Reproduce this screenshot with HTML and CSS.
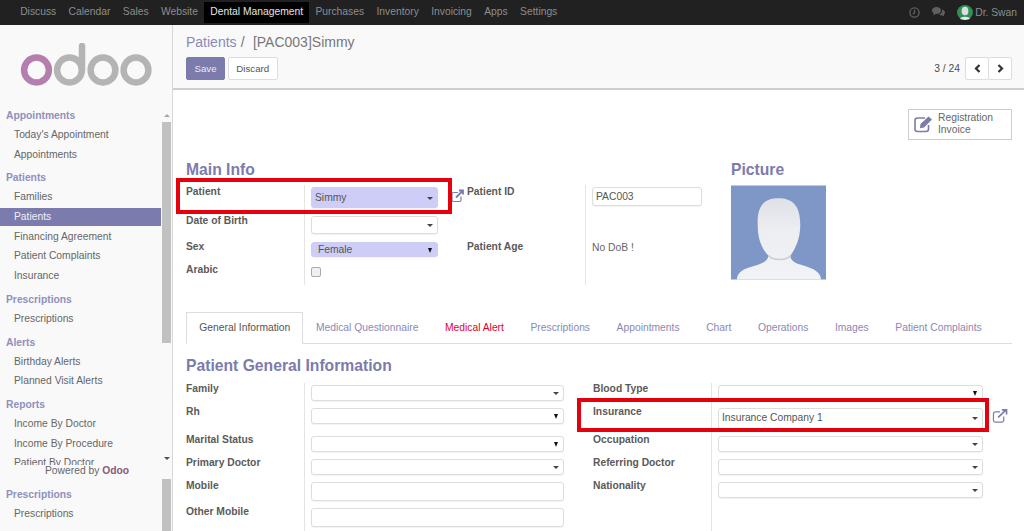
FILE: index.html
```html
<!DOCTYPE html>
<html lang="en">

<head>
    <meta charset="UTF-8">
    <title>Patients - Odoo</title>
    <link rel="stylesheet" href="styles.css">
</head>

<body>
    <nav class="topbar">
        <ul class="apps">
            <li>Discuss</li>
            <li>Calendar</li>
            <li>Sales</li>
            <li>Website</li>
            <li class="current">Dental Management</li>
            <li>Purchases</li>
            <li>Inventory</li>
            <li>Invoicing</li>
            <li>Apps</li>
            <li>Settings</li>
        </ul>
        <div class="systray">
            <svg class="tray-icon" width="11" height="11" viewBox="0 0 11 11" fill="none" stroke="#5f5f5f" stroke-width="1.3">
                <circle cx="5.5" cy="5.5" r="4.6" />
                <path d="M5.5 2.8V5.8L3.8 7" />
            </svg>
            <svg class="tray-icon" width="13" height="10" viewBox="0 0 13 10" fill="#5f5f5f">
                <path d="M0 3.5C0 1.5 2 0 4.5 0S9 1.5 9 3.5 7 7 4.5 7H3.5L1.2 8.5 1.6 6.2C.6 5.6 0 4.6 0 3.5Z" />
                <path d="M10 2.5C11.8 3 13 4.1 13 5.6 13 6.5 12.5 7.2 11.8 7.7L12.2 9.6 10 8.3C8.8 8.3 7.6 8 6.8 7.4 8.8 7.2 10.6 5.6 10 2.5Z" />
            </svg>
            <svg class="avatar" width="16" height="15" viewBox="0 0 16 15">
                <ellipse cx="8" cy="7.5" rx="8" ry="7.5" fill="#2f8f57" />
                <ellipse cx="8" cy="6" rx="3.4" ry="4.3" fill="#d9dedb" />
                <path d="M3 14C4 11 12 11 13 14L8 15Z" fill="#e6e9e7" />
            </svg>
            <span>Dr. Swan</span>
        </div>
    </nav>

    <div class="app">
        <aside class="sidebar">
            <div class="logo">
                <svg width="134" height="46" viewBox="0 0 134 46" fill="none" stroke-width="6.5">
                    <circle cx="16.5" cy="27" r="12.4" stroke="#b47fae" />
                    <circle cx="49.5" cy="27" r="12.4" stroke="#b4b4b4" />
                    <path d="M62 3V27" stroke="#b4b4b4" stroke-linecap="round" />
                    <circle cx="83" cy="27" r="12.4" stroke="#b4b4b4" />
                    <circle cx="116" cy="27" r="12.4" stroke="#b4b4b4" />
                </svg>
            </div>

            <div class="menu-scroll upper">
                <div class="menu-list">
                    <h4>Appointments</h4>
                    <a>Today's Appointment</a>
                    <a>Appointments</a>
                    <h4>Patients</h4>
                    <a>Families</a>
                    <a class="active">Patients</a>
                    <a>Financing Agreement</a>
                    <a>Patient Complaints</a>
                    <a>Insurance</a>
                    <h4>Prescriptions</h4>
                    <a>Prescriptions</a>
                    <h4>Alerts</h4>
                    <a>Birthday Alerts</a>
                    <a>Planned Visit Alerts</a>
                    <h4>Reports</h4>
                    <a>Income By Doctor</a>
                    <a>Income By Procedure</a>
                    <a>Patient By Doctor</a>
                </div>
                <div class="scrollbar">
                    <span class="arrow-up"></span>
                    <span class="thumb"></span>
                    <span class="arrow-down"></span>
                </div>
            </div>

            <div class="powered">Powered by <b>Odoo</b></div>

            <div class="menu-scroll lower">
                <div class="menu-list">
                    <h4>Prescriptions</h4>
                    <a>Prescriptions</a>
                </div>
                <div class="scrollbar">
                    <span class="thumb"></span>
                </div>
            </div>
        </aside>

        <main class="content">
            <header class="control-panel">
                <div class="breadcrumb"><span class="crumb">Patients</span> /&nbsp; [PAC003]Simmy</div>
                <div class="cp-row">
                    <div class="cp-buttons">
                        <button class="btn primary">Save</button>
                        <button class="btn">Discard</button>
                    </div>
                    <div class="pager">
                        <span>3 / 24</span>
                        <div class="pager-btns">
                            <button>
                                <svg width="7" height="9" viewBox="0 0 7 9" fill="none" stroke="#333" stroke-width="2.2"><path d="M5.5 1L2 4.5 5.5 8" /></svg>
                            </button>
                            <button>
                                <svg width="7" height="9" viewBox="0 0 7 9" fill="none" stroke="#333" stroke-width="2.2"><path d="M1.5 1L5 4.5 1.5 8" /></svg>
                            </button>
                        </div>
                    </div>
                </div>
            </header>

            <section class="sheet">
                <div class="button-box">
                    <button class="stat-btn">
                        <svg width="20" height="18" viewBox="0 0 20 18" fill="none" stroke="#7c7bad" stroke-width="1.6">
                            <path d="M11 3H3.5C2 3 1 4 1 5.5V14C1 15.5 2 16.5 3.5 16.5H12C13.5 16.5 14.5 15.5 14.5 14V10" />
                            <path d="M6.5 9L14.5 1.5 18 4.5 10 12.5 6 13.2Z" fill="#7c7bad" stroke="none" />
                        </svg>
                        <span>Registration<br>Invoice</span>
                    </button>
                </div>

                <div class="top-part">
                    <div class="main-info">
                        <h2>Main Info</h2>
                        <div class="info-grid">
                            <label>Patient</label>
                            <div class="cell">
                                <div class="field required tall caret">Simmy</div>
                            </div>
                            <div class="link-cell">
                                <svg class="ext-link" width="13" height="14" viewBox="0 0 13 13" fill="none" stroke="#7c7bad" stroke-width="1.2">
                                    <path d="M7 3H2.5C1.5 3 1 3.5 1 4.5V10.5C1 11.5 1.5 12 2.5 12H8.5C9.5 12 10 11.5 10 10.5V7" />
                                    <path d="M5 8L12 1M8 1H12V5" stroke-width="1.8" />
                                </svg>
                            </div>
                            <label>Patient ID</label>
                            <div class="cell">
                                <div class="field text-box">PAC003</div>
                            </div>

                            <label>Date of Birth</label>
                            <div class="cell">
                                <div class="field caret dob"></div>
                            </div>
                            <div></div>
                            <div></div>
                            <div class="cell"></div>

                            <label>Sex</label>
                            <div class="cell">
                                <div class="field required native indent">Female</div>
                            </div>
                            <div></div>
                            <label>Patient Age</label>
                            <div class="cell"><span class="plain">No DoB !</span></div>

                            <label>Arabic</label>
                            <div class="cell">
                                <span class="checkbox"></span>
                            </div>
                            <div></div>
                            <div></div>
                            <div class="cell"></div>
                        </div>
                    </div>

                    <div class="picture">
                        <h2>Picture</h2>
                        <svg width="95" height="95" viewBox="0 0 96 95">
                            <defs>
                                <linearGradient id="skin" x1="0" y1="0" x2="0" y2="1">
                                    <stop offset="0" stop-color="#dfe1e8" />
                                    <stop offset="0.4" stop-color="#eceef2" />
                                    <stop offset="1" stop-color="#f2f3f6" />
                                </linearGradient>
                            </defs>
                            <rect width="96" height="95" fill="#7f97c6" />
                            <path d="M6 95C6 88 12 84 24 81 32 79 37 76 38 71 31 64 27 54 27 40 26 20 34 13 48 13S70 20 70 40C70 54 65 64 60 71 60 76 65 79 74 81 84 84 91 88 91 95Z" fill="url(#skin)" />
                            <path d="M38 71C42 76 56 76 60 71" fill="none" stroke="#c9ccd6" stroke-width="1.5" />
                        </svg>
                    </div>
                </div>

                <ul class="tabs">
                    <li class="on">General Information</li>
                    <li>Medical Questionnaire</li>
                    <li class="alert">Medical Alert</li>
                    <li>Prescriptions</li>
                    <li>Appointments</li>
                    <li>Chart</li>
                    <li>Operations</li>
                    <li>Images</li>
                    <li>Patient Complaints</li>
                </ul>

                <h2 class="general-title">Patient General Information</h2>

                <div class="general-grid">
                    <label>Family</label>
                    <div class="cell"><div class="field caret"></div></div>
                    <label class="second">Blood Type</label>
                    <div class="cell"><div class="field native"></div></div>
                    <div></div>

                    <label>Rh</label>
                    <div class="cell"><div class="field native"></div></div>
                    <label class="second">Insurance</label>
                    <div class="cell"><div class="field caret big">Insurance Company 1</div></div>
                    <div class="link-cell">
                        <svg class="ext-link" width="16" height="14" viewBox="0 0 16 15" fill="none" stroke="#7c7bad" stroke-width="1.3">
                            <path d="M8 3H3C1.8 3 1 3.8 1 5V12C1 13.2 1.8 14 3 14H10C11.2 14 12 13.2 12 12V8" />
                            <path d="M6 9L14.5 1M10 1H15V6" stroke-width="1.8" />
                        </svg>
                    </div>

                    <label>Marital Status</label>
                    <div class="cell"><div class="field native"></div></div>
                    <label class="second">Occupation</label>
                    <div class="cell"><div class="field caret"></div></div>
                    <div></div>

                    <label>Primary Doctor</label>
                    <div class="cell"><div class="field caret"></div></div>
                    <label class="second">Referring Doctor</label>
                    <div class="cell"><div class="field caret"></div></div>
                    <div></div>

                    <label>Mobile</label>
                    <div class="cell"><div class="field text-box"></div></div>
                    <label class="second">Nationality</label>
                    <div class="cell"><div class="field caret"></div></div>
                    <div></div>

                    <label>Other Mobile</label>
                    <div class="cell"><div class="field text-box"></div></div>
                    <div></div>
                    <div class="cell"></div>
                    <div></div>
                </div>
            </section>
        </main>
    </div>

    <!-- red annotation boxes drawn over the screenshot -->
    <div class="mark mark-patient"></div>
    <div class="mark mark-insurance"></div>
</body>

</html>
```

FILE: styles.css
```css
* {
    box-sizing: border-box;
}

html,
body {
    margin: 0;
    padding: 0;
    height: 100%;
    overflow: hidden;
}

body {
    font-family: "Liberation Sans", Arial, sans-serif;
    font-size: 10.3px;
    color: #4c4c4c;
    background: #fff;
    position: relative;
}

/* top bar */
.topbar {
    height: 25px;
    background: #212121;
    display: flex;
    justify-content: space-between;
    color: #8d8d8d;
}

.apps {
    list-style: none;
    margin: 0;
    padding: 0 0 0 14px;
    display: flex;
}

.apps li {
    padding: 0 6.2px;
    line-height: 23px;
}

.apps li.current {
    background: #000;
    color: #e4e4e4;
    margin-top: 2px;
    height: 21px;
    line-height: 19px;
}

.systray {
    display: flex;
    align-items: center;
    padding-right: 7px;
    height: 24px;
}

.tray-icon {
    margin-right: 12px;
}

.avatar {
    margin-right: 2px;
}

/* sidebar */
.app {
    display: flex;
    height: 506px;
}

.sidebar {
    width: 173px;
    flex: none;
    background: #f9f9f9;
    border-right: 1px solid #d8d8d8;
    display: flex;
    flex-direction: column;
}

.logo {
    height: 81px;
    flex: none;
    padding: 18px 0 0 20px;
}

.logo svg {
    display: block;
}

.menu-scroll {
    display: flex;
    overflow: hidden;
}

.menu-scroll.upper {
    height: 359px;
    flex: none;
}

.menu-scroll.lower {
    flex: 1;
    margin-top: 2px;
}

.lower .menu-list {
    padding-top: 1.5px;
}

.menu-list {
    width: 161px;
    flex: none;
}

.menu-list h4 {
    margin: 4px 0 0;
    padding-left: 6px;
    height: 19px;
    line-height: 19px;
    font-size: 10.3px;
    font-weight: bold;
    color: #9090bd;
}

.upper h4:first-child {
    margin-top: 0;
}

.menu-list a {
    display: block;
    height: 19.7px;
    line-height: 19.7px;
    padding-left: 14px;
    color: #666;
}

.menu-list a.active {
    background: #7c7bad;
    color: #f0f0f6;
    height: 18px;
    line-height: 18px;
    margin: 1px 0 0.7px;
}

.scrollbar {
    width: 11px;
    flex: none;
    position: relative;
    display: flex;
    flex-direction: column;
    padding-left: 1px;
}

.thumb {
    display: block;
    background: #c1c1c1;
    width: 9px;
}

.upper .thumb {
    height: 221px;
    margin-top: 16px;
}

.lower .thumb {
    flex: 1;
}

.arrow-up,
.arrow-down {
    position: absolute;
    left: 3px;
    width: 0;
    height: 0;
    border-left: 3px solid transparent;
    border-right: 3px solid transparent;
}

.arrow-up {
    top: 8px;
    border-bottom: 3px solid #a8a8a8;
}

.arrow-down {
    bottom: 5px;
    border-top: 3px solid #505050;
}

.powered {
    height: 13px;
    flex: none;
    line-height: 13px;
    margin-top: -1px;
    padding-left: 45px;
    color: #666;
    position: relative;
}

.powered b {
    color: #875a7b;
}

/* control panel */
.content {
    flex: 1;
    min-width: 0;
    display: flex;
    flex-direction: column;
}

.control-panel {
    height: 65px;
    flex: none;
    background: #f9f9f9;
    border-bottom: 2px solid #cfcfcf;
    padding: 9px 12px 0 13px;
}

.breadcrumb {
    font-size: 14px;
    line-height: 16px;
    color: #777;
    word-spacing: 0.25px;
}

.crumb {
    color: #8a89b6;
}

.cp-row {
    margin-top: 7px;
    display: flex;
    justify-content: space-between;
}

.cp-buttons {
    display: flex;
    gap: 3px;
}

.btn {
    height: 23px;
    width: 49.5px;
    padding: 0;
    font: inherit;
    font-size: 9.7px;
    color: #555;
    background: #fff;
    border: 1px solid #ddd;
    border-radius: 2px;
}

.btn.primary {
    background: #7c7bad;
    border-color: #7c7bad;
    color: #e9e9f3;
    width: 39px;
}

.pager {
    display: flex;
    align-items: center;
    gap: 5px;
}

.pager-btns {
    display: flex;
}

.pager-btns button {
    width: 24px;
    height: 23px;
    padding: 0;
    background: #fff;
    border: 1px solid #ddd;
    border-radius: 2px;
    display: flex;
    align-items: center;
    justify-content: center;
}

.pager-btns button + button {
    margin-left: -1px;
}

/* form sheet */
.sheet {
    flex: 1;
    padding: 19px 12px 0 13px;
    overflow: hidden;
}

.button-box {
    display: flex;
    justify-content: flex-end;
}

.stat-btn {
    width: 104px;
    height: 31px;
    padding: 0 0 2px 5px;
    font: inherit;
    color: #666;
    background: #fff;
    border: 1px solid #ccc;
    display: flex;
    align-items: center;
    gap: 4px;
    text-align: left;
    line-height: 12px;
}

h2 {
    margin: 0;
    font-size: 15.7px;
    line-height: 18px;
    font-weight: bold;
    color: #7c7bad;
}

.top-part {
    display: flex;
    margin-top: 21px;
}

.main-info {
    width: 545px;
}

.picture svg {
    display: block;
    margin-top: 6px;
}

.info-grid {
    display: grid;
    grid-template-columns: 118px 143px 20px 118px 118px;
    grid-template-rows: 29px 26px 23px 22px;
    margin-top: 6px;
}

label {
    font-weight: bold;
    color: #5a5a5a;
    line-height: 12px;
}

.info-grid label {
    padding-top: 1px;
}

.cell {
    border-left: 1px solid #e4e4e4;
    padding-left: 6px;
}

.field {
    position: relative;
    height: 16px;
    line-height: 14px;
    padding-left: 3px;
    background: #fff;
    border: 1px solid #ddd;
    border-radius: 3px;
    color: #555;
    box-shadow: 0 1px 1px rgba(0, 0, 0, 0.05);
}

.info-grid .field {
    width: 127px;
    margin-top: 2px;
}

.field.required {
    background: #cdcdf7;
    border-color: #cdcdf7;
}

.field.tall {
    height: 21px;
    line-height: 19px;
}

.field.dob {
    height: 18px;
}

.field.indent {
    padding-left: 6px;
    height: 15px;
    line-height: 13px;
}

.field.text-box {
    height: 19px;
    line-height: 17px;
}

.info-grid .field.text-box {
    width: 110px;
}

.field.big {
    height: 21px;
    line-height: 17px;
}

.field.caret::after,
.field.native::after {
    content: "";
    position: absolute;
    top: 50%;
    width: 0;
    height: 0;
    border-style: solid;
    border-color: #444 transparent transparent;
}

.field.caret::after {
    right: 4px;
    margin-top: -1px;
    border-width: 3px 3.5px 0;
}

.field.native::after {
    right: 5px;
    margin-top: -2px;
    border-width: 5px 2.5px 0;
    border-top-color: #111;
}

.checkbox {
    display: block;
    width: 10px;
    height: 10px;
    margin-top: 4px;
    background: #f0f0f0;
    border: 1px solid #aaa;
    border-radius: 2px;
}

.plain {
    display: block;
    margin-top: 2px;
    line-height: 12px;
    color: #666;
}

.ext-link {
    display: block;
}

.link-cell {
    padding: 4px 0 0 4px;
}

.general-grid .link-cell {
    padding: 3px 0 0 3px;
}

/* tabs */
.tabs {
    list-style: none;
    margin: 27px 0 0;
    padding: 0;
    height: 32px;
    display: flex;
    border-bottom: 1px solid #ddd;
}

.tabs li {
    padding: 0 12.3px;
    height: 32px;
    line-height: 30px;
    color: #8a89b6;
    border: 1px solid transparent;
}

.tabs li.on {
    padding-right: 11.3px;
    color: #555;
    background: #fff;
    border-color: #ddd #ddd #fff;
}

.tabs li.alert {
    color: #e4002b;
}

.general-title {
    margin-top: 13px;
}

.general-grid {
    display: grid;
    grid-template-columns: 118px 289px 118px 278px 26px;
    grid-template-rows: 23px 28px 23px 23px 26px 26px;
    margin-top: 8px;
}

.general-grid .field {
    margin-top: 1.5px;
    width: 253px;
}

.general-grid label.second + .cell .field {
    width: 265px;
}

/* red annotation boxes */
.mark {
    position: absolute;
    border: 4px solid #e5000b;
    pointer-events: none;
}

.mark-patient {
    left: 176px;
    top: 178px;
    width: 276px;
    height: 36px;
}

.mark-insurance {
    left: 577px;
    top: 398px;
    width: 412px;
    height: 34px;
}
```
